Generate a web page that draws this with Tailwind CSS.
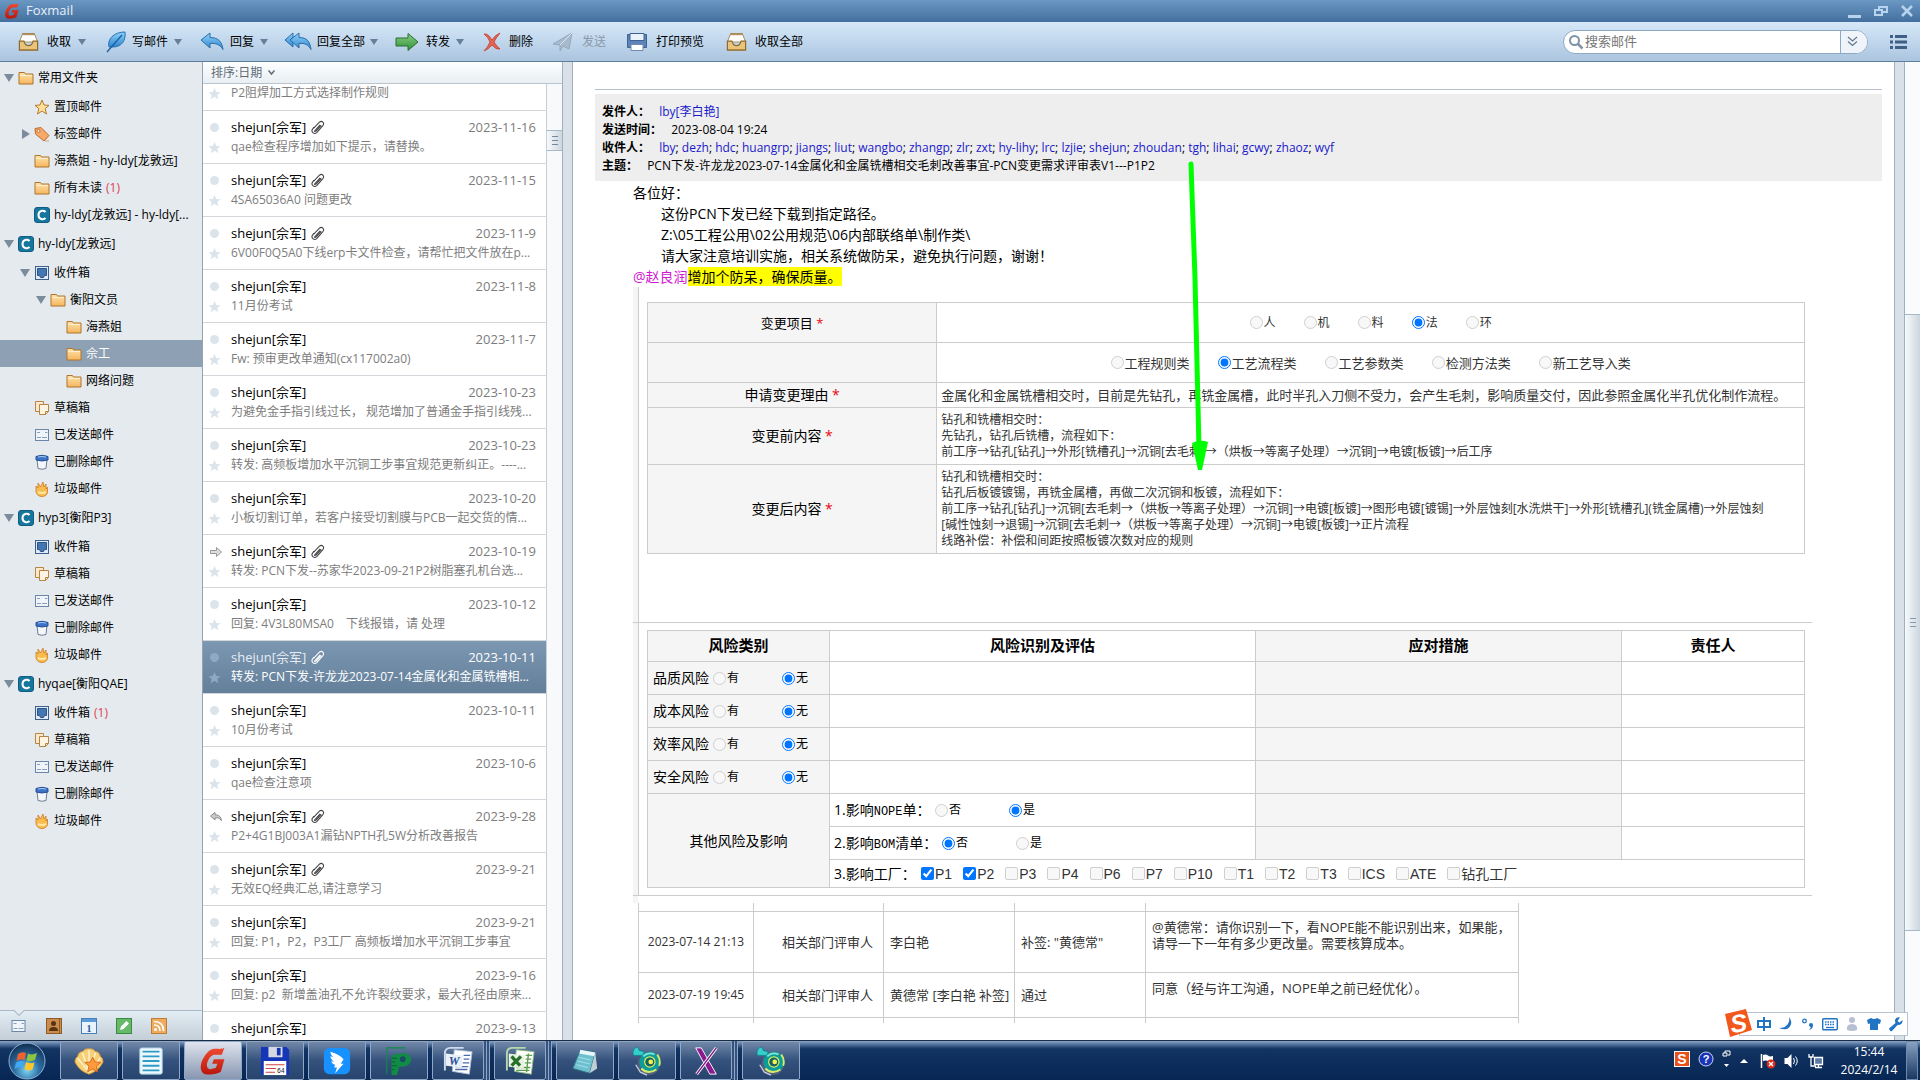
<!DOCTYPE html>
<html lang="zh-CN">
<head>
    <meta charset="UTF-8" />
    <title>Foxmail</title>
    <script src="https://cdn.jsdelivr.net/npm/@tailwindcss/browser@4"></script>
</head>
<body class="h-screen flex flex-col overflow-hidden bg-white text-black text-xs font-['Open_Sans','Noto_Sans_CJK_SC',sans-serif]">

    <!-- icon set -->
    <svg class="absolute w-0 h-0">
        <defs>
            <linearGradient id="gGold" x1="0" y1="0" x2="0" y2="1"><stop offset="0" stop-color="#ffe3ac" /><stop offset="1" stop-color="#f4b65e" /></linearGradient>
            <linearGradient id="gBlue" x1="0" y1="0" x2="0" y2="1"><stop offset="0" stop-color="#8fd2fb" /><stop offset="1" stop-color="#2e87d0" /></linearGradient>
            <linearGradient id="gGreen" x1="0" y1="0" x2="0" y2="1"><stop offset="0" stop-color="#8ad184" /><stop offset="1" stop-color="#2f8d38" /></linearGradient>
            <linearGradient id="gRed" x1="0" y1="0" x2="0" y2="1"><stop offset="0" stop-color="#f04a30" /><stop offset="1" stop-color="#b8170c" /></linearGradient>
            <radialGradient id="gOrb" cx=".5" cy=".75" r=".7"><stop offset="0" stop-color="#7fd6f5" /><stop offset=".5" stop-color="#2c6da3" /><stop offset="1" stop-color="#143459" /></radialGradient>
        </defs>
        <symbol id="i-fox" viewBox="0 0 28 32"><path d="M27 1 24 9H15C11 10 8 15 7 20c0 4 2 6 5 5l5-1 2-5h-6l2-5h12l-4 14c-3 3-13 4-18 3-5-2-6-7-4-14C5 8 10 2 16 2c4 0 8 1 11-1z" fill="url(#gRed)" /></symbol>
        <symbol id="i-folder" viewBox="0 0 16 16"><path d="M1 14V2.500h5.500l1 1.500H15v10z" fill="url(#gGold)" stroke="#b0752c" /><path d="M2 5.500h12" stroke="#fff0cf" /></symbol>
        <symbol id="i-star" viewBox="0 0 16 16"><path d="M8 1l2 5 5 .4-3.900 3.300L12.500 15 8 12l-4.500 3 1.400-5.300L1 6.400 6 6z" fill="#ffdf9a" stroke="#b57a2c" stroke-linejoin="round" /></symbol>
        <symbol id="i-tag" viewBox="0 0 16 16"><path d="M1 2.500 7 1.500 15 9.500 10 15 1.500 8z" fill="#f7a968" stroke="#c26a2c" /><circle cx="4.500" cy="5" r="1.500" fill="#fff" stroke="#c26a2c" /><path d="M11 15h4" stroke="#cfa98c" /></symbol>
        <symbol id="i-account" viewBox="0 0 16 16"><rect x=".5" y=".5" width="15" height="15" rx="2.500" fill="#17769d" stroke="#0f5c80" /><path d="M11.500 5C9.500 3 4.500 3.500 4.500 8s5 5 7 3" fill="none" stroke="#fff" stroke-width="2" /></symbol>
        <symbol id="i-inbox" viewBox="0 0 16 16"><rect x="1.500" y="1.500" width="13" height="13" fill="#dfeaf6" stroke="#3f5f8e" /><path d="M3.500 3.500h9v7h-2l-1 2h-3l-1-2h-2z" fill="#4377b3" stroke="#2c5587" /></symbol>
        <symbol id="i-draft" viewBox="0 0 16 16"><path d="M1.500 1.500h8v10h-8z" fill="#fbe8cd" stroke="#b68443" /><path d="M5.500 4.500h9v7l-3 3h-6z" fill="#fff4e2" stroke="#b68443" /><path d="M14.500 11.500h-3v3" fill="none" stroke="#b68443" /></symbol>
        <symbol id="i-sent" viewBox="0 0 16 16"><rect x="1.500" y="2.500" width="13" height="11" fill="#eef4fa" stroke="#6b86a6" /><path d="M3 5.500h3M3 10.500h4M8 10.500h5M11 5.500h2.500" stroke="#8a9fb8" /></symbol>
        <symbol id="i-bin" viewBox="0 0 16 16"><path d="M3 5l1 9.500q4 1.500 8 0L13 5z" fill="#f3f6fa" stroke="#6d7f96" /><path d="M2 2.500q6-2.500 12 0V6q-6 2-12 0z" fill="#3a72c8" stroke="#284f93" /><path d="M4 3q4-1 8 0" stroke="#a9cbf5" fill="none" /></symbol>
        <symbol id="i-junk" viewBox="0 0 16 16"><path d="M2 10V5l2 2V2l2.500 4L9 1l1 5 2-3v5l1.500-2V11c0 3-3 4.500-5.500 4.500S2 14 2 10z" fill="#f8bd4f" stroke="#cf7a20" stroke-width=".8" /><path d="M4 11q4 2 8 0" stroke="#ffe7a6" stroke-width="2" fill="none" /></symbol>
        <symbol id="i-clip" viewBox="0 0 14 14"><path d="M4 10.500 9.500 4.500M3.500 7.500 8.800 2q1.800-1.500 3.200 0t0 3.200L6.500 11.500q-2 2-3.800.3t0-3.800l1-1.200M10.500 5 5.800 10.200q-1 1-1.800.3" fill="none" stroke="currentColor" /></symbol>
        <symbol id="i-mark" viewBox="0 0 14 14"><path d="M7 1l1.900 4.300 4.600.3-3.500 3 1.100 4.500L7 10.600l-4.100 2.500L4 8.600l-3.500-3 4.600-.3z" fill="currentColor" /></symbol>
        <symbol id="i-tray" viewBox="0 0 24 22"><path d="M5 2h14M4 5h16" stroke="#a98750" stroke-width="2" /><path d="M5 3h14l3 8H2z" fill="#fff" stroke="#a98750" /><path d="M2 10h5q1 5 5 5t5-5h5v10H2z" fill="#e9c57c" stroke="#8c6a2f" stroke-width="1.300" /><path d="M3 19.500h18" stroke="#a88037" /></symbol>
        <symbol id="i-feather" viewBox="0 0 20 22"><path d="M3 16C1 8 8 1 19 1c1 8-3 15-12 15z" fill="url(#gBlue)" stroke="#2a70b3" /><path d="M1 21 16 4" stroke="#1e5f9f" stroke-width="1.300" /></symbol>
        <symbol id="i-reply" viewBox="0 0 24 20"><path d="M1 8 10 1v4.500c8 0 12 4 13 12-3-5-7-6.500-13-6V16z" fill="url(#gBlue)" stroke="#2a6da8" stroke-linejoin="round" /></symbol>
        <symbol id="i-replyall" viewBox="0 0 28 20"><path d="M1 8 9 1v4L6 8l3 3v4z" fill="url(#gBlue)" stroke="#2a6da8" /><path d="M6 8 15 1v4.500c8 0 11 4 12 12-3-5-6-6.500-12-6V16z" fill="url(#gBlue)" stroke="#2a6da8" stroke-linejoin="round" /></symbol>
        <symbol id="i-forward" viewBox="0 0 24 20"><path d="M1 6h12V1.500L23 10l-10 8.500V14H1z" fill="url(#gGreen)" stroke="#2a6f31" stroke-linejoin="round" /></symbol>
        <symbol id="i-delete" viewBox="0 0 20 20"><path d="M2 2q4-1 8 6 3-5 8-7-4 5-6 9 3 5 6 7-4 1-8-4-3 4-8 6 4-4 6-9Q6 5 2 2z" fill="#e46354" stroke="#c2402f" stroke-width=".8" /></symbol>
        <symbol id="i-send" viewBox="0 0 22 20"><path d="M1 12 20 1l-3 16-6-3-3 5v-6z" fill="#a8bbce" stroke="#93a7bc" /><path d="M8 13 20 1" stroke="#dbe6f1" /></symbol>
        <symbol id="i-print" viewBox="0 0 22 20"><path d="M1.500 2.500h19v13h-19z" fill="#5d84b8" stroke="#3e6293" /><path d="M4 1.500h14v7H4z" fill="#e9f1fa" stroke="#3e6293" /><path d="M5 12.500h12v6H5z" fill="#fff" stroke="#6f8bb0" /></symbol>
    </svg>

    <header class="h-[22px] shrink-0 flex items-center pl-1 pr-1.5 text-[#e6f0fa] text-[13px] bg-linear-to-b from-[#6b97c3] to-[#44709f]">
        <svg class="w-4 h-4 mr-1.5"><use href="#i-fox" /></svg>
        <h1>Foxmail</h1>
        <div class="ml-auto flex items-center gap-3">
            <button aria-label="最小化"><svg class="w-[14px] h-[14px]" viewBox="0 0 14 14"><path d="M0 11h13v3H0z" fill="#b8d3ee" /></svg></button>
            <button aria-label="还原"><svg class="w-[14px] h-[14px]" viewBox="0 0 14 14" fill="none" stroke="#b8d3ee" stroke-width="2"><path d="M5 5V3h8v5H9M1 6h7v5H1z" /></svg></button>
            <button aria-label="关闭"><svg class="w-[14px] h-[14px]" viewBox="0 0 14 14"><path d="M2 2l10 10M12 2L2 12" stroke="#b8d3ee" stroke-width="2.500" /></svg></button>
        </div>
    </header>

    <nav class="h-10 shrink-0 flex items-center pl-[17px] pr-3 border-b border-[#5f7f9e] bg-linear-to-b from-[#d6e8f9] to-[#abc5df]">
        <button class="w-[89px] flex items-center gap-[7px]"><svg class="w-[23px] h-5"><use href="#i-tray" /></svg>收取<svg class="w-2 h-1.5" viewBox="0 0 8 6"><path d="M0 0h8L4 6z" fill="#66809c" /></svg></button>
        <button class="w-[94px] flex items-center gap-1.5"><svg class="w-5 h-[22px]"><use href="#i-feather" /></svg>写邮件<svg class="w-2 h-1.5" viewBox="0 0 8 6"><path d="M0 0h8L4 6z" fill="#66809c" /></svg></button>
        <button class="w-[84px] flex items-center gap-1.5"><svg class="w-6 h-5"><use href="#i-reply" /></svg>回复<svg class="w-2 h-1.5" viewBox="0 0 8 6"><path d="M0 0h8L4 6z" fill="#66809c" /></svg></button>
        <button class="w-[110px] flex items-center gap-[5px]"><svg class="w-7 h-5"><use href="#i-replyall" /></svg>回复全部<svg class="w-2 h-1.5" viewBox="0 0 8 6"><path d="M0 0h8L4 6z" fill="#66809c" /></svg></button>
        <button class="w-[88px] flex items-center gap-1.5"><svg class="w-[26px] h-5"><use href="#i-forward" /></svg>转发<svg class="w-2 h-1.5" viewBox="0 0 8 6"><path d="M0 0h8L4 6z" fill="#66809c" /></svg></button>
        <button class="w-[70px] flex items-center gap-[7px]"><svg class="w-5 h-5"><use href="#i-delete" /></svg>删除</button>
        <button class="w-[74px] flex items-center gap-2 text-[#8a98a8]"><svg class="w-[22px] h-5"><use href="#i-send" /></svg>发送</button>
        <button class="w-[99px] flex items-center gap-2"><svg class="w-[22px] h-5"><use href="#i-print" /></svg>打印预览</button>
        <button class="flex items-center gap-[7px]"><svg class="w-[23px] h-5"><use href="#i-tray" /></svg>收取全部</button>
        <div class="ml-auto w-[305px] h-6 flex items-center rounded-full border border-[#8ea9c4] bg-white overflow-hidden">
            <svg class="w-4 h-4 ml-1 shrink-0" viewBox="0 0 16 16"><circle cx="6.500" cy="6.500" r="4.500" fill="none" stroke="#7f92a6" stroke-width="2" /><path d="M10 10l4.500 4.500" stroke="#7f92a6" stroke-width="2.500" /></svg>
            <input type="text" aria-label="搜索邮件" placeholder="搜索邮件" class="min-w-0 flex-1 px-px text-[13px] outline-none placeholder:text-[#777]" />
            <button aria-label="搜索选项" class="w-[27px] h-full shrink-0 flex items-center pl-1.5 border-l border-[#8ea9c4] bg-[#eef4fa]"><svg class="w-[11px] h-[11px]" viewBox="0 0 11 11" fill="none" stroke="#68788a" stroke-width="1.300"><path d="M1 1l4.500 4L10 1M1 5.500l4.500 4 4.500-4" /></svg></button>
        </div>
        <button aria-label="菜单" class="ml-[22px]"><svg class="w-[18px] h-[14px]" viewBox="0 0 18 14"><path d="M0 1.500h3M5 1.500h12M0 7h3M5 7h12M0 12.500h3M5 12.500h12" stroke="#3f5f85" stroke-width="3" /></svg></button>
    </nav>

    <main class="flex-1 min-h-0 flex">
        <!-- folder tree -->
        <aside class="w-[203px] shrink-0 flex flex-col bg-[#e4eaee] border-r border-[#93a3b1]">
            <ul id="tree" class="flex-1 min-h-0 overflow-hidden"></ul>
            <div class="relative h-[30px] shrink-0 flex items-center gap-[19px] pl-2.5 border-t border-[#aab9c5] bg-linear-to-b from-[#e3edf4] to-[#c3ced7]">
                <svg class="absolute left-3.5 -top-px w-2.5 h-1.5" viewBox="0 0 10 6"><path d="M0 0l5 5 5-5z" fill="#e4eaee" /><path d="M0 .5l5 5 5-5" fill="none" stroke="#8fa0ae" /></svg>
                <button aria-label="邮件"><svg class="w-[17px] h-4"><use href="#i-sent" /></svg></button>
                <button aria-label="通讯录"><svg class="w-4 h-4" viewBox="0 0 16 16"><rect x=".5" y=".5" width="15" height="15" fill="#c98d50" stroke="#8f5c28" /><circle cx="7.500" cy="5.500" r="2.500" fill="#5b3310" /><path d="M3 13q0-4 4.500-4t4.500 4z" fill="#5b3310" /><path d="M13.500 1v14" stroke="#8f5c28" /></svg></button>
                <button aria-label="日历"><svg class="w-4 h-4" viewBox="0 0 16 16"><rect x=".5" y=".5" width="15" height="15" fill="#eaf3fc" stroke="#4a7fb5" /><path d="M1 1h14v3H1z" fill="#5b9bd8" /><text x="8" y="13.500" font-size="10" font-weight="bold" text-anchor="middle" font-family="Liberation Serif" fill="#2c5c94">1</text></svg></button>
                <button aria-label="便签"><svg class="w-4 h-4" viewBox="0 0 16 16"><rect x=".5" y=".5" width="15" height="15" fill="#67b96a" stroke="#3b8a40" /><path d="M4 12l1-3.500L10.500 3 13 5.500 7.500 11z" fill="#fff" /></svg></button>
                <button aria-label="RSS"><svg class="w-4 h-4" viewBox="0 0 16 16"><rect x=".5" y=".5" width="15" height="15" fill="#efac60" stroke="#c07c34" /><circle cx="4.500" cy="11.500" r="1.500" fill="#fff" /><path d="M3 7q6 0 6 6M3 3.500q9.500 0 9.500 9.500" fill="none" stroke="#fff" stroke-width="1.600" /></svg></button>
            </div>
        </aside>

        <!-- mail list -->
        <section class="w-[359px] shrink-0 flex flex-col">
            <button class="h-[22px] shrink-0 flex items-center gap-1.5 pl-2 text-[#5f6b76] bg-linear-to-b from-[#fdfeff] to-[#e9eff3] border-b border-[#b9c5ce]">排序:日期<svg class="w-[7px] h-[7px]" viewBox="0 0 7 7"><path d="M.5 1.500l3 3.500 3-3.500" fill="none" stroke="#5f6b76" stroke-width="1.500" /></svg></button>
            <div class="flex-1 min-h-0 flex">
                <ul id="mails" class="w-[343px] overflow-hidden"></ul>
                <div class="flex-1 border-l border-[#c6cfd6] bg-[#f7f9fb]">
                    <div class="mt-[46px] h-[21px] flex flex-col items-center justify-center gap-[3px] border-y border-[#a9b8c5] bg-linear-to-r from-[#f7fafc] to-[#ccd6de]">
                        <span class="w-1.5 h-px bg-[#7089a0]"></span>
                        <span class="w-1.5 h-px bg-[#7089a0]"></span>
                        <span class="w-1.5 h-px bg-[#7089a0]"></span>
                    </div>
                </div>
            </div>
        </section>
        <div class="w-[11px] shrink-0 bg-[#d9e0e7] border-x border-[#9fb0be]"></div>

        <!-- message -->
        <article class="relative flex-1 min-w-0 overflow-hidden pt-[27px] pl-[22px] pr-3">
            <div class="border-t border-[#b5bccb]"></div>
            <div class="mt-1 px-[7px] pt-[9px] pb-1.5 leading-[18px] bg-[#eee]">
                <p><b class="mr-1.5">发件人：</b> <a href="#" class="text-[#1a1acb]">lby[李白艳]</a></p>
                <p><b class="mr-1.5">发送时间：</b> 2023-08-04 19:24</p>
                <p><b class="mr-1.5">收件人：</b> <span id="receivers"></span></p>
                <p><b class="mr-1.5">主题：</b> PCN下发-许龙龙2023-07-14金属化和金属铣槽相交毛刺改善事宜-PCN变更需求评审表V1---P1P2</p>
            </div>
            <div class="ml-[38px] mt-px text-sm leading-[21px]">
                <p>各位好：</p>
                <p class="pl-7">这份PCN下发已经下载到指定路径。</p>
                <p class="pl-7">Z:\05工程公用\02公用规范\06内部联络单\制作类\</p>
                <p class="pl-7">请大家注意培训实施，相关系统做防呆，避免执行问题，谢谢！</p>
                <p><a href="#" class="text-[#d117d1]">@赵良润</a><mark class="bg-[#ff0]">增加个防呆，确保质量。</mark></p>
            </div>

            <div class="ml-[38px] mr-[70px] border-b border-[#ccc]">
                <div class="border-l-[5px] border-[#f5f5f5]">
                    <div class="h-[335px] pl-2 pr-[7px] pt-[15px] border-l border-[#ccc]">
                        <table class="w-full border-collapse text-xs leading-4 text-[#333]">
                            <tr class="h-10">
                                <th class="w-1/4 border border-[#ccc] bg-[#f5f5f5] font-normal text-[13px] text-black">变更项目 <span class="text-red-600">*</span></th>
                                <td class="border border-[#ccc]"><div id="items" class="flex justify-center gap-7"></div></td>
                            </tr>
                            <tr class="h-10">
                                <th class="border border-[#ccc] bg-[#f5f5f5]"></th>
                                <td class="border border-[#ccc]"><div id="kinds" class="flex justify-center gap-7 text-[13px]"></div></td>
                            </tr>
                            <tr class="h-[25px]">
                                <th class="border border-[#ccc] bg-[#f5f5f5] font-normal text-sm leading-4 text-black">申请变更理由 <span class="text-red-600">*</span></th>
                                <td class="border border-[#ccc] px-1 text-[13px]">金属化和金属铣槽相交时，目前是先钻孔，再铣金属槽，此时半孔入刀侧不受力，会产生毛刺，影响质量交付，因此参照金属化半孔优化制作流程。</td>
                            </tr>
                            <tr class="h-[57px]">
                                <th class="border border-[#ccc] bg-[#f5f5f5] font-normal text-sm leading-4 text-black">变更前内容 <span class="text-red-600">*</span></th>
                                <td class="border border-[#ccc] px-1">钻孔和铣槽相交时：<br />先钻孔，钻孔后铣槽，流程如下：<br />前工序→钻孔[钻孔]→外形[铣槽孔]→沉铜[去毛刺]→（烘板→等离子处理）→沉铜]→电镀[板镀]→后工序</td>
                            </tr>
                            <tr class="h-[89px]">
                                <th class="border border-[#ccc] bg-[#f5f5f5] font-normal text-sm leading-4 text-black">变更后内容 <span class="text-red-600">*</span></th>
                                <td class="border border-[#ccc] px-1">钻孔和铣槽相交时：<br />钻孔后板镀镀锡，再铣金属槽，再做二次沉铜和板镀，流程如下：<br />前工序→钻孔[钻孔]→沉铜[去毛刺→（烘板→等离子处理）→沉铜]→电镀[板镀]→图形电镀[镀锡]→外层蚀刻[水洗烘干]→外形[铣槽孔](铣金属槽)→外层蚀刻<br />[碱性蚀刻→退锡]→沉铜[去毛刺→（烘板→等离子处理）→沉铜]→电镀[板镀]→正片流程<br />线路补偿：补偿和间距按照板镀次数对应的规则</td>
                            </tr>
                        </table>
                    </div>
                </div>
            </div>

            <div class="ml-[38px] mr-[70px] border-b border-[#ccc]">
                <div class="border-l-[5px] border-[#f5f5f5]">
                    <div class="pl-2 pr-[7px] py-[7px] border-l border-[#ccc]">
                        <table class="w-full border-collapse text-sm">
                            <thead>
                                <tr class="h-[31px] text-[15px]">
                                    <th class="w-[182px] border border-[#ccc] bg-[#f5f5f5]">风险类别</th>
                                    <th class="border border-[#ccc]">风险识别及评估</th>
                                    <th class="w-[366px] border border-[#ccc] bg-[#f5f5f5]">应对措施</th>
                                    <th class="w-[183px] border border-[#ccc]">责任人</th>
                                </tr>
                            </thead>
                            <tbody id="risks"></tbody>
                            <tbody>
                                <tr class="h-[33px]">
                                    <th rowspan="3" class="border border-[#ccc] bg-[#f5f5f5] font-normal">其他风险及影响</th>
                                    <td class="border border-[#ccc] pl-1"><div class="flex items-center"><span class="w-[101px]">1.影响<span class="font-['Liberation_Mono'] text-xs">NOPE</span>单：</span><span id="nope" class="flex gap-12 text-xs"></span></div></td>
                                    <td class="border border-[#ccc] bg-[#f5f5f5]"></td>
                                    <td class="border border-[#ccc]"></td>
                                </tr>
                                <tr class="h-[33px]">
                                    <td class="border border-[#ccc] pl-1"><div class="flex items-center"><span class="w-[108px]">2.影响<span class="font-['Liberation_Mono'] text-xs">BOM</span>清单：</span><span id="bom" class="flex gap-12 text-xs"></span></div></td>
                                    <td class="border border-[#ccc] bg-[#f5f5f5]"></td>
                                    <td class="border border-[#ccc]"></td>
                                </tr>
                                <tr class="h-7">
                                    <td colspan="3" class="border border-[#ccc] pl-1"><div class="flex items-center"><span class="w-[87px]">3.影响工厂：</span><span id="plants" class="flex gap-[11px] text-[#333] font-['Liberation_Sans','Noto_Sans_CJK_SC',sans-serif]"></span></div></td>
                                </tr>
                            </tbody>
                        </table>
                    </div>
                </div>
            </div>

            <div class="ml-[38px] border-l-[5px] border-[#f5f5f5] h-[7px]"></div>
            <table class="ml-[43px] w-[881px] table-fixed border-collapse leading-4 text-[#333] text-[13px]">
                <tr class="h-2">
                    <td class="w-[115px] border-x border-b border-[#ccc]"></td>
                    <td class="w-[130px] border-x border-b border-[#ccc]"></td>
                    <td class="w-[131px] border-x border-b border-[#ccc]"></td>
                    <td class="w-[131px] border-x border-b border-[#ccc]"></td>
                    <td class="border-x border-b border-[#ccc]"></td>
                </tr>
                <tr class="h-[61px]">
                    <td class="border border-[#ccc] text-center whitespace-nowrap text-xs">2023-07-14 21:13</td>
                    <td class="border border-[#ccc] pr-2.5 text-right">相关部门评审人</td>
                    <td class="border border-[#ccc] pl-1.5">李白艳</td>
                    <td class="border border-[#ccc] pl-1.5">补签: "黄德常"</td>
                    <td class="border border-[#ccc] pl-1.5 pt-[7px] align-top whitespace-nowrap">@黄德常：请你识别一下，看NOPE能不能识别出来，如果能，<br />请导一下一年有多少更改量。需要核算成本。</td>
                </tr>
                <tr class="h-[45px]">
                    <td class="border border-[#ccc] text-center whitespace-nowrap text-xs">2023-07-19 19:45</td>
                    <td class="border border-[#ccc] pr-2.5 text-right">相关部门评审人</td>
                    <td class="border border-[#ccc] pl-1.5 whitespace-nowrap">黄德常 [李白艳 补签]</td>
                    <td class="border border-[#ccc] pl-1.5">通过</td>
                    <td class="border border-[#ccc] pl-1.5 pt-[7px] align-top">同意（经与许工沟通，NOPE单之前已经优化）。</td>
                </tr>
                <tr class="h-1.5">
                    <td class="border-x border-[#ccc]"></td>
                    <td class="border-x border-[#ccc]"></td>
                    <td class="border-x border-[#ccc]"></td>
                    <td class="border-x border-[#ccc]"></td>
                    <td class="border-x border-[#ccc]"></td>
                </tr>
            </table>

            <!-- hand drawn arrow -->
            <svg class="absolute left-[610px] top-[96px] w-8 h-[314px]" viewBox="0 0 32 314"><path d="M8 6 12 120 16 290" fill="none" stroke="#0f0" stroke-width="5" stroke-linecap="round" /><path d="M9 285q8-4 16-1l-6 28h-4z" fill="#0f0" /></svg>
        </article>
        <div class="w-[11px] shrink-0 bg-[#d9e0e7] border-x border-[#9fb0be]"></div>
        <div class="w-[15px] shrink-0 pt-[252px] bg-[#fafbfc]">
            <div class="h-[617px] flex flex-col items-center justify-center gap-[3px] border-y border-[#a9b8c5] bg-linear-to-r from-[#f7fafc] to-[#ccd6de]">
                <span class="w-1.5 h-px bg-[#8798a8]"></span>
                <span class="w-1.5 h-px bg-[#8798a8]"></span>
                <span class="w-1.5 h-px bg-[#8798a8]"></span>
            </div>
        </div>
    </main>

    <!-- input method bar -->
    <div class="absolute right-3 bottom-11 h-6 flex items-center gap-1.5 pl-4 pr-[3px] bg-white border border-[#b9c3d3]">
        <svg class="absolute -left-4 -top-1 w-7 h-7" viewBox="0 0 28 28"><path d="M1 5 22 0l6 21L6 28z" fill="#f2571c" /><text x="14.500" y="23" font-size="25" font-weight="bold" font-style="italic" text-anchor="middle" font-family="Liberation Sans" fill="#fff" transform="rotate(-8 14 14)">S</text></svg>
        <svg class="w-4 h-4" viewBox="0 0 16 16" fill="none" stroke="#2173c4" stroke-width="2"><path d="M2 5h12v6H2zM8 1v14" /></svg>
        <svg class="w-4 h-4" viewBox="0 0 16 16"><path d="M11 1q4 5 1 9.500T1 12q6 0 8.500-3.500T11 1z" fill="#2173c4" /></svg>
        <svg class="w-4 h-4" viewBox="0 0 12 16"><circle cx="2.500" cy="5" r="1.800" fill="none" stroke="#2173c4" stroke-width="1.300" /><circle cx="9" cy="9" r="2" fill="#2173c4" /><path d="M11 9q0 4-4 5 2-2 2-4z" fill="#2173c4" /></svg>
        <svg class="w-4 h-4" viewBox="0 0 16 16"><rect x=".7" y="2.700" width="14.600" height="11" rx="1" fill="none" stroke="#2173c4" stroke-width="1.400" /><path d="M3 6h10M3 8.500h10" stroke="#2173c4" stroke-width="1.500" stroke-dasharray="1.500 1" /><path d="M4 11.500h8" stroke="#2173c4" stroke-width="1.300" /></svg>
        <svg class="w-4 h-4" viewBox="0 0 12 16"><circle cx="6" cy="4" r="3" fill="#b7bfd2" /><path d="M1 14q-1-6 5-6t5 6q-5 2-10 0z" fill="#b7bfd2" /></svg>
        <svg class="w-4 h-4" viewBox="0 0 14 16"><path d="M0 4l4-2q3 2 6 0l4 2-1 4-2-.5V14H3V7.500L1 8z" fill="#2173c4" /></svg>
        <svg class="w-4 h-4" viewBox="0 0 14 16"><path d="M13.500 4 10.500 6.500 8.500 5 11 1.500Q7 .5 6 4q0 2 .5 3L0 12.500Q1 16 3 15l5.500-6Q14 9 13.500 4z" fill="#2173c4" /></svg>
    </div>

    <footer class="h-10 shrink-0 flex items-stretch pr-0.5 text-white border-t border-[#1a2c44] bg-linear-to-b from-[#8ba6c9] from-0% via-[#123463] via-20% to-[#072654]">
        <button aria-label="开始" class="w-[60px] pl-2"><svg class="w-[38px] h-[38px]" viewBox="0 0 38 38"><circle cx="19" cy="19" r="18" fill="url(#gOrb)" stroke="#8fb3d4" /><path d="M10 12q4-3 8-1l-1.500 7q-4-2-8 1z" fill="#f0622d" /><path d="M20 11.500q4 2 9-.5L27 18q-5 2-8.500.5z" fill="#8cc63f" /><path d="M8 20.500q4-3 8-1L14.500 26q-4-2-8 1z" fill="#3fa9f5" /><path d="M18 20q4 2 8.500.5l-2 7q-4 2-8-.5z" fill="#fcc72c" /></svg></button>
        <div id="tasks" class="flex gap-1"></div>
        <div class="ml-auto flex items-center gap-2">
            <svg class="w-4 h-4 mb-1" viewBox="0 0 16 16"><rect x=".5" y=".5" width="15" height="15" fill="#e8501c" stroke="#fff" /><text x="8" y="13" font-size="14" font-weight="bold" text-anchor="middle" font-family="Liberation Sans" fill="#fff">S</text></svg>
            <svg class="w-4 h-4 mb-1" viewBox="0 0 16 16"><circle cx="8" cy="8" r="7" fill="#1a34b8" stroke="#c9d3ee" /><text x="8" y="12" font-size="11" font-weight="bold" text-anchor="middle" font-family="Liberation Sans" fill="#fff">?</text></svg>
            <svg class="w-2.5 h-[18px] mb-1" viewBox="0 0 10 18"><path d="M3 3V1h5v4H6M1 3h4v3H1z" fill="none" stroke="#fff" /><path d="M2 14h5l-2.500 3z" fill="#fff" /></svg>
            <svg class="w-2 h-1" viewBox="0 0 8 4"><path d="M0 4l4-4 4 4z" fill="#fff" /></svg>
            <svg class="w-4 h-4 ml-1" viewBox="0 0 16 16"><path d="M1.500 1v14" stroke="#fff" stroke-width="1.500" /><path d="M3 2q3-1 5 .5t5 .5v6q-3 0-5-1T3 8z" fill="#fff" /><circle cx="11" cy="11" r="4.500" fill="#d92a1c" /><path d="M9 9l4 4M13 9l-4 4" stroke="#fff" stroke-width="1.400" /></svg>
            <svg class="w-4 h-4" viewBox="0 0 15 16"><path d="M0 5h3l4-4v14l-4-4H0z" fill="#fff" /><path d="M9 5q2 3 0 6M11 3.500q3.500 4.500 0 9" fill="none" stroke="#fff" /></svg>
            <svg class="w-4 h-4" viewBox="0 0 16 16"><path d="M6.500 4.500h8v7h-8z" fill="#5b7ba6" stroke="#fff" stroke-width="1.300" /><path d="M1 1v3h4V1M3 4v9h5M7 14.500h7M10.500 12v2" stroke="#fff" stroke-width="1.300" fill="none" /></svg>
            <time class="w-[74px] text-center leading-[18px]">15:44<br />2024/2/14</time>
        </div>
        <button aria-label="显示桌面" class="w-3 h-full border border-[#6f89ab] bg-linear-to-b from-[#8aa2c2] to-[#1a3863]"></button>
    </footer>

    <script>
        // depth, icon, label, unread count, arrow
        const folders = [
            [0, "folder", "常用文件夹", "", "open"],
            [1, "star", "置顶邮件"],
            [1, "tag", "标签邮件", "", "closed"],
            [1, "folder", "海燕姐 - hy-ldy[龙敦远]"],
            [1, "folder", "所有未读", "(1)"],
            [1, "account", "hy-ldy[龙敦远] - hy-ldy[..."],
            [0, "account", "hy-ldy[龙敦远]", "", "open"],
            [1, "inbox", "收件箱", "", "open"],
            [2, "folder", "衡阳文员", "", "open"],
            [3, "folder", "海燕姐"],
            [3, "folder", "佘工"],
            [3, "folder", "网络问题"],
            [1, "draft", "草稿箱"],
            [1, "sent", "已发送邮件"],
            [1, "bin", "已删除邮件"],
            [1, "junk", "垃圾邮件"],
            [0, "account", "hyp3[衡阳P3]", "", "open"],
            [1, "inbox", "收件箱"],
            [1, "draft", "草稿箱"],
            [1, "sent", "已发送邮件"],
            [1, "bin", "已删除邮件"],
            [1, "junk", "垃圾邮件"],
            [0, "account", "hyqae[衡阳QAE]", "", "open"],
            [1, "inbox", "收件箱", "(1)"],
            [1, "draft", "草稿箱"],
            [1, "sent", "已发送邮件"],
            [1, "bin", "已删除邮件"],
            [1, "junk", "垃圾邮件"],
        ];
        const indent = ["h-[31px] pl-1", "h-[27px] pl-5", "h-[27px] pl-9", "h-[27px] pl-[52px]"];
        const arrows = {
            open: '<svg class="w-2.5 h-2" viewBox="0 0 10 8"><path d="M0 0h10L5 8z" fill="#7b8c9c" /></svg>',
            closed: '<svg class="w-2 h-2.5 ml-0.5" viewBox="0 0 8 10"><path d="M0 0v10l8-5z" fill="#7b8c9c" /></svg>',
        };
        document.getElementById("tree").innerHTML = folders.map(([depth, icon, label, count, arrow]) => `
            <li class="${label === "佘工" ? "bg-[#8ea1b4] text-white" : ""}">
                <a href="#" class="flex items-center whitespace-nowrap ${indent[depth]}">
                    <span class="w-[14px] shrink-0">${arrows[arrow] || ""}</span>
                    <svg class="w-4 h-4 mr-1 shrink-0"><use href="#i-${icon}" /></svg>${label}
                    ${count ? `<span class="ml-1 text-[#e0404f]">${count}</span>` : ""}
                </a>
            </li>`).join("");

        // date, subject, attachment, state
        const mails = [
            ["", "P2阻焊加工方式选择制作规则"],
            ["2023-11-16", "qae检查程序增加如下提示，请替换。", 1],
            ["2023-11-15", "4SA65036A0 问题更改", 1],
            ["2023-11-9", "6V00F0Q5A0下线erp卡文件检查，请帮忙把文件放在p...", 1],
            ["2023-11-8", "11月份考试"],
            ["2023-11-7", "Fw: 预审更改单通知(cx117002a0)"],
            ["2023-10-23", "为避免金手指引线过长， 规范增加了普通金手指引线残..."],
            ["2023-10-23", "转发: 高频板增加水平沉铜工步事宜规范更新纠正。----..."],
            ["2023-10-20", "小板切割订单，若客户接受切割膜与PCB一起交货的情..."],
            ["2023-10-19", "转发: PCN下发--苏家华2023-09-21P2树脂塞孔机台选...", 1, "forwarded"],
            ["2023-10-12", "回复: 4V3L80MSA0　下线报错，请 处理"],
            ["2023-10-11", "转发: PCN下发-许龙龙2023-07-14金属化和金属铣槽相...", 1, "selected"],
            ["2023-10-11", "10月份考试"],
            ["2023-10-6", "qae检查注意项"],
            ["2023-9-28", "P2+4G1BJ003A1漏钻NPTH孔5W分析改善报告", 1, "replied"],
            ["2023-9-21", "无效EQ经典汇总,请注意学习", 1],
            ["2023-9-21", "回复: P1，P2，P3工厂 高频板增加水平沉铜工步事宜"],
            ["2023-9-16", "回复: p2&nbsp; 新增盖油孔不允许裂纹要求，最大孔径由原来..."],
            ["2023-9-13", ""],
        ];
        const marks = {
            forwarded: '<svg class="w-3 h-2.5" viewBox="0 0 12 10"><path d="M.5 3.500h6v-3l5 4.500-5 4.500v-3h-6z" fill="#ddd" stroke="#999" /></svg>',
            replied: '<svg class="w-3 h-2.5" viewBox="0 0 24 20"><path d="M1 8 10 1v4.500c8 0 12 4 13 12-3-5-7-6.500-13-6V16z" fill="#ccc" stroke="#888" stroke-width="2" /></svg>',
        };
        document.getElementById("mails").innerHTML = mails.map(([date, subject, clip, state]) => {
            const sel = state === "selected";
            const dot = marks[state] || `<span class="block w-[9px] h-[9px] rounded-full ${sel ? "bg-[#8ea9c0]" : "bg-[#dce4eb]"}"></span>`;
            const top = date ? `
                <div class="flex items-center h-[21px] text-[13px]">
                    <span class="w-[23px] pl-0.5 shrink-0">${dot}</span>
                    <span class="${sel ? "text-[#e6edf4]" : "text-black"}">shejun[佘军]</span>
                    ${clip ? `<svg class="w-[15px] h-[15px] ml-1 ${sel ? "text-white" : "text-[#444]"}"><use href="#i-clip" /></svg>` : ""}
                    <span class="ml-auto">${date}</span>
                </div>` : "";
            return `
            <li class="${date ? "h-[53px] pt-1.5" : "h-[27px]"} pl-[5px] pr-2.5 border-b border-[#d3d7db] ${sel ? "text-white bg-linear-to-b from-[#7c97b1] to-[#637f9a]" : "text-[#7d7d7d]"}">
                ${top}
                <div class="flex items-center h-[18px] whitespace-nowrap">
                    <span class="w-[23px] shrink-0 ${sel ? "text-[#8ea9c0]" : "text-[#dce4eb]"}"><svg class="w-[13px] h-[13px]"><use href="#i-mark" /></svg></span>
                    ${subject}
                </div>
            </li>`;
        }).join("");

        const people = "lby dezh hdc huangrp jiangs liut wangbo zhangp zlr zxt hy-lihy lrc lzjie shejun zhoudan tgh lihai gcwy zhaoz wyf";
        document.getElementById("receivers").innerHTML = people.split(" ").map(p => `<a href="#" class="text-[#1a1acb]">${p}</a>`).join("; ");

        // form options
        function option(type, name, label, checked) {
            const shape = type === "radio" ? "rounded-full" : "rounded-xs";
            return `<label class="flex items-center gap-px"><input type="${type}" name="${name}" ${checked ? "checked" : ""} class="size-[13px] appearance-none checked:appearance-auto border border-[#cfcfcf] bg-[#f8f8f8] ${shape}" />${label}</label>`;
        }
        function fill(id, type, labels, checked) {
            document.getElementById(id).innerHTML = labels.map(l => option(type, id, l, checked.includes(l))).join("");
        }
        document.getElementById("risks").innerHTML = ["品质风险", "成本风险", "效率风险", "安全风险"].map((r, i) => `
            <tr class="h-[33px]">
                <th class="border border-[#ccc] bg-[#f5f5f5] pl-[5px] font-normal">
                    <div class="flex items-center"><span class="w-[60px] text-left">${r}</span><span id="risk${i}" class="flex gap-[43px] text-xs"></span></div>
                </th>
                <td class="border border-[#ccc]"></td>
                <td class="border border-[#ccc] bg-[#f5f5f5]"></td>
                <td class="border border-[#ccc]"></td>
            </tr>`).join("");
        [0, 1, 2, 3].forEach(i => fill("risk" + i, "radio", ["有", "无"], ["无"]));
        fill("items", "radio", ["人", "机", "料", "法", "环"], ["法"]);
        fill("kinds", "radio", ["工程规则类", "工艺流程类", "工艺参数类", "检测方法类", "新工艺导入类"], ["工艺流程类"]);
        fill("nope", "radio", ["否", "是"], ["是"]);
        fill("bom", "radio", ["否", "是"], ["否"]);
        fill("plants", "checkbox", ["P1", "P2", "P3", "P4", "P6", "P7", "P10", "T1", "T2", "T3", "ICS", "ATE", "钻孔工厂"], ["P1", "P2"]);

        // taskbar buttons: title, drawing, stacked, active
        const disc = '<circle cx="18" cy="19" r="12" fill="#55607e" /><path d="M1 8q0-6 5-7l2 4 5 1-1 4H2z" fill="#35d0cb" stroke="#0e7f86" stroke-width=".8" /><circle cx="19" cy="17" r="11" fill="#0b9d98" /><path d="M10 24q7 7 16 1M27 9q4 6 2 12" fill="none" stroke="#d9ec6a" stroke-width="2" /><path d="M12 11q5-5 12-2" fill="none" stroke="#7fe6d6" stroke-width="2" /><circle cx="19" cy="17" r="5.500" fill="#17625d" stroke="#d9ec6a" stroke-width="1.300" /><circle cx="20" cy="17" r="2.500" fill="#f6ef54" /><path d="M4 20l5 8 7 3" fill="none" stroke="#c7cede" stroke-width="1.500" />';
        const tasks = [
            ["贝壳", '<path d="M16 30Q6 27 1 17q0-4 3-6 1-5 5-5 3-4 7-3 4-1 7 3 4 0 5 5 3 2 3 6-5 10-15 13z" fill="#f7cf77" stroke="#d99a32" /><path d="M16 28 4 13M16 28 9 7M16 28V4M16 28l7-21M16 28l12-15" stroke="#fff2cc" stroke-width="1.500" /><path d="M20 12l2.500 5 6 .5-4.500 4 1 6-5-3-5.500 3 1.500-6-4.500-4 6-.5z" fill="#ff9a3c" stroke="#d4661a" />'],
            ["记事本", '<rect x="4" y="2" width="24" height="28" rx="2" fill="#eef8fd" stroke="#9cc6de" /><path d="M7 6h18M7 11h18M7 16h18M7 21h18M7 26h18" stroke="#2c9cc4" stroke-width="2" />'],
            ["Foxmail", '<use href="#i-fox" x="1" y="1" width="30" height="30" />', 0, 1],
            ["保存", '<path d="M1 1h27l3 3v27H1z" fill="#1636b8" /><path d="M9 1h15v11H9z" fill="#d6d9e0" /><path d="M18 2h4v8h-4z" fill="#1636b8" /><path d="M4 16h24v15H4z" fill="#fff" /><path d="M6 20h20M6 24h11M6 28h10" stroke="#c33" /><text x="18" y="29" font-size="7" font-family="Liberation Mono" fill="#222">64</text>'],
            ["钉钉", '<rect x="2" y="2" width="28" height="28" rx="6" fill="#1791ff" /><path d="M9 6q10 3 14 8l-3 5h3l-9 10 2-6h-3l1-3q-4-1-4-4l3 1q-4-3-4-6l4 1q-4-2-4-6z" fill="#fff" />'],
            ["编辑器", '<path d="M3 30V2h20" fill="none" stroke="#118c46" stroke-width="1.200" /><path d="M8 10q20-6 21 4 0 8-13 8l-2 9H8z" fill="#118c46" /><path d="M8 13h6M8 17h4M8 21h6M8 25h3" stroke="#0b5c2e" /><circle cx="20" cy="14" r="3" fill="#1b4a68" />'],
            ["Word", '<path d="M2 26V8q0-6 6-6h14" fill="none" stroke="#cfdcf0" stroke-width="2" /><path d="M12 4l19 2-3 24-18-3z" fill="#fff" stroke="#aabddb" /><path d="M22 10h7M22 14h6M21 18h7M13 22h14M13 25h13" stroke="#4a6da8" stroke-width="1.500" /><path d="M3 8l18 2-1 13-17-2z" fill="#e9f0fa" /><text x="12" y="20" font-size="13" font-weight="bold" font-style="italic" text-anchor="middle" font-family="Liberation Serif" fill="#274f96">W</text>', 1],
            ["Excel", '<path d="M2 26V8q0-6 6-6h14" fill="none" stroke="#b7d7ae" stroke-width="2" /><path d="M12 4l19 2-3 24-18-3z" fill="#fff" stroke="#8cba80" /><path d="M22 10h7M22 14h6M21 18h7M12 23h15M12 26h14M25 8l-2 20" stroke="#5b9d4c" stroke-width="1.500" /><path d="M4 8l17 2-1 14-16-2z" fill="#e5f3e0" /><path d="M7 11l9 10M17 11 7 21" stroke="#28702a" stroke-width="3.500" />', 1],
            ["便笺", '<path d="M11 4l16 3-6 22L3 24z" fill="#6ec0cf" stroke="#2e7283" /><path d="M11 4l16 3-1 4L10 8z" fill="#e8f7fa" /><path d="M21 29l8-5-2-17z" fill="#bfcdd4" /><path d="M9 12l13 3M8 16l13 3M7 20l12 3" stroke="#a9e2ea" />'],
            ["光盘一", disc],
            ["X", '<path d="M5 2h6l16 28h-7z" fill="#8a1a8e" stroke="#fff" /><path d="M27 2 6 30" stroke="#fff" stroke-width="3.500" /><path d="M27 2 6 30" stroke="#7a1580" stroke-width="1.500" />', 1],
            ["光盘二", disc],
        ];
        document.getElementById("tasks").innerHTML = tasks.map(([title, art, stacked, active]) => `
            <div class="w-[58px] flex ${stacked ? "pr-[3px]" : ""}">
                <button aria-label="${title}" class="flex-1 flex items-center justify-center rounded-xs border border-[#8fa7c6] ${active ? "bg-linear-to-b from-[#dfe5ee] to-[#8796b0]" : "bg-linear-to-b from-[#7288a8] via-[#34527d] via-50% to-[#27446e]"}">
                    <svg class="w-[30px] h-[30px]" viewBox="0 0 32 32">${art}</svg>
                </button>
                ${stacked ? '<span class="w-[3px] border-r border-[#8fa7c6] bg-[#34527d]"></span><span class="w-[3px] -mr-[3px] border-r border-[#8fa7c6] bg-[#34527d]"></span>' : ""}
            </div>`).join("");
    </script>

</body>
</html>
